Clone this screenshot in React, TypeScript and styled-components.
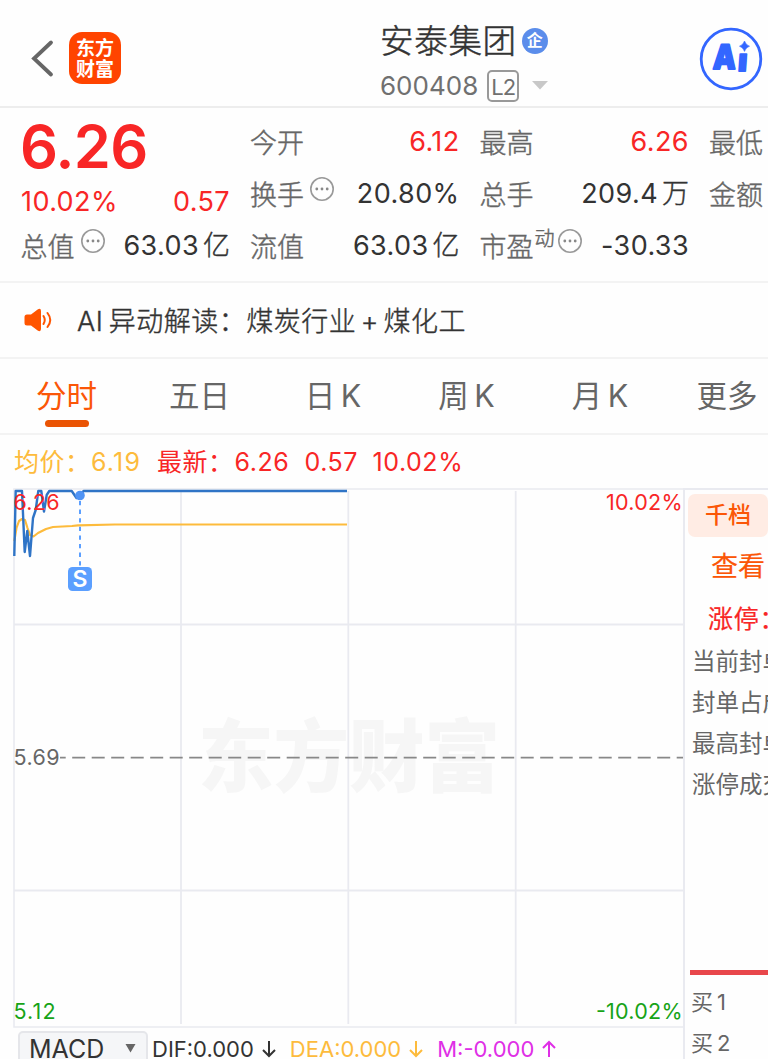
import React from "react";
import styled, { createGlobalStyle } from "styled-components";

const GlobalStyle = createGlobalStyle`
  * { box-sizing: border-box; }
  html, body { margin: 0; padding: 0; background: #fff; overflow: hidden; }
`;

const C = {
  red: "#f82626",
  ink: "#333",
  grey: "#666",
  orange: "#fb5607",
  yellow: "#fdbb3c",
  green: "#17a317",
  magenta: "#df2fe6",
  line: "#e9eaf0",
};

const FONT = `Inter, "Noto Sans CJK SC", sans-serif`;

const Page = styled.main`
  width: 768px;
  height: 1059px;
  overflow: hidden;
  background: #fefefe;
  color: ${C.ink};
  font-family: ${FONT};
  white-space: nowrap;
  display: flex;
  flex-direction: column;
`;

const Header = styled.header`
  flex: none;
  height: 108px;
  border-bottom: 2px solid #ededed;
  display: flex;
  align-items: flex-start;
  padding: 27px 5px 0 30px;
`;

const BackIcon = styled.svg`
  margin-top: 11px;
  width: 26px;
  height: 42px;
`;

const Logo = styled.div`
  margin: 5px 0 0 13px;
  padding-bottom: 2px;
  width: 52px;
  height: 52px;
  border-radius: 13px;
  background: #ff4400;
  color: #fff;
  font: 700 19px/21px "Noto Sans CJK SC", sans-serif;
  display: flex;
  flex-direction: column;
  align-items: center;
  justify-content: center;
`;

const StockTitle = styled.div`
  margin: -10px 0 0 259px;
`;

const NameRow = styled.h1`
  margin: 0;
  height: 47px;
  font-size: 33.5px;
  line-height: 44px;
  font-weight: 300;
  -webkit-text-stroke: 0.5px;
  letter-spacing: 0.7px;
  display: flex;
  align-items: center;
`;

const Badge = styled.span`
  margin-left: 5px;
  width: 26px;
  height: 26px;
  border-radius: 50%;
  background: #5b8deb;
  color: #fff;
  font-size: 16px;
  font-weight: 700;
  line-height: 24px;
  letter-spacing: 0;
  text-align: center;
  -webkit-text-stroke: 0;
`;

const CodeRow = styled.div`
  height: 43px;
  display: flex;
  align-items: center;
  color: #707070;
  font-size: 26px;
  letter-spacing: 0;
`;

const Level = styled.span`
  margin-left: 9px;
  width: 32px;
  height: 32px;
  border: 2px solid #999;
  border-radius: 5px;
  font-size: 22px;
  line-height: 30px;
  letter-spacing: -1px;
  text-align: center;
`;

const Caret = styled.svg`
  margin-left: 13px;
`;

const AiIcon = styled.svg`
  margin-left: auto;
  width: 64px;
  height: 64px;
`;

const Quote = styled.section`
  flex: none;
  height: 175px;
  border-bottom: 2px solid #f3f3f3;
  padding: 8px 0 0 21px;
  display: grid;
  grid-template-columns: 209px 209px 209px 58px;
  column-gap: 20.5px;
`;

const Column = styled.div`
  display: flex;
  flex-direction: column;
`;

const Cell = styled.div`
  height: 52px;
  display: flex;
  align-items: center;
  justify-content: space-between;
`;

const Label = styled.span`
  display: flex;
  align-items: center;
  padding-top: 4px;
  margin-left: -0.5px;
  color: ${C.grey};
  font-size: 27px;
  line-height: 36px;
  font-weight: 300;
  -webkit-text-stroke: 0.45px;
`;

const Dynamic = styled.sup`
  font-size: 20px;
  line-height: 20px;
  margin: -18px 0 0 1px;
`;

const Value = styled.span<{ $up?: boolean }>`
  color: ${(p) => (p.$up ? C.red : C.ink)};
  font-size: 27px;
  line-height: 36px;
  letter-spacing: 0.4px;
`;

const Unit = styled.span`
  margin-left: 4px;
  letter-spacing: 0;
  font-weight: 300;
  -webkit-text-stroke: 0.4px;
`;

const Price = styled.strong`
  color: ${C.red};
  font-size: 59.5px;
  height: 64px;
  line-height: 61px;
  font-weight: 600;
  letter-spacing: -0.7px;
  margin-left: -1px;
`;

const Change = styled(Cell)`
  height: 40px;
  padding-top: 4px;
`;

const Info = styled.svg<{ $gap: number }>`
  width: 26px;
  height: 26px;
  margin: -15px 0 0 ${(p) => p.$gap}px;
`;

const Notice = styled.section`
  flex: none;
  height: 76px;
  border-bottom: 2px solid #f3f3f3;
  padding: 0 0 0 24px;
  display: flex;
  align-items: center;
`;

const NoticeText = styled.span`
  margin: -2px 0 0 24px;
  font-weight: 300;
  -webkit-text-stroke: 0.4px;
  font-size: 27px;
  letter-spacing: 0.5px;
  word-spacing: -2.5px;
`;

const Plus = styled.span`
  margin: 0 4.5px;
`;

const Tabs = styled.nav`
  flex: none;
  height: 76px;
  border-bottom: 2px solid #f3f3f3;
  display: grid;
  grid-template-columns: 133px 133px 134px 133px 134px 120px;
`;

const Tab = styled.div<{ $active?: boolean }>`
  position: relative;
  display: flex;
  justify-content: center;
  padding-top: 14px;
  font-size: 30.5px;
  line-height: 46px;
  word-spacing: -3px;
  color: ${(p) => (p.$active ? C.orange : C.grey)};
  &::after {
    content: "";
    display: ${(p) => (p.$active ? "block" : "none")};
    position: absolute;
    left: 45px;
    bottom: 6px;
    width: 44px;
    height: 7px;
    border-radius: 4px;
    background: #ea5404;
  }
`;

const Legend = styled.section`
  flex: none;
  height: 53px;
  padding: 12px 0 0 14px;
  display: flex;
  align-items: baseline;
  font-size: 25px;
  line-height: 30px;
  letter-spacing: 0.55px;
`;

const LegendItem = styled.span<{ $color: string; $width: number; $spacing?: number }>`
  color: ${(p) => p.$color};
  width: ${(p) => p.$width}px;
  letter-spacing: ${(p) => p.$spacing ?? 0.55}px;
`;

const Board = styled.section`
  flex: 1;
  display: flex;
  min-height: 0;
`;

const ChartColumn = styled.div`
  flex: none;
  width: 683px;
`;

const Chart = styled.svg`
  display: block;
  width: 683px;
  height: 541px;
  font-family: ${FONT};
`;

const IndicatorBar = styled.div`
  display: flex;
  height: 36px;
  padding: 2px 0 0 18px;
`;

const IndicatorSelect = styled.div`
  width: 130px;
  height: 42px;
  border: 2px solid #e5e6ea;
  border-radius: 5px;
  background: #f5f6f8;
  padding: 0 10px 0 9px;
  display: flex;
  justify-content: space-between;
  font-size: 25px;
  line-height: 33px;
`;

const SelectCaret = styled.svg`
  margin-top: 10px;
`;

const Indicator = styled.span<{ $color: string; $gap: number }>`
  color: ${(p) => p.$color};
  margin-left: ${(p) => p.$gap}px;
  font-size: 22px;
  line-height: 36px;
  display: flex;
`;

const Arrow = styled.svg`
  margin: 9px 0 0 7px;
`;

const Side = styled.aside`
  width: 85px;
  overflow: hidden;
  border-left: 2px solid ${C.line};
  border-top: 2px solid ${C.line};
  padding: 4px 0 0 3px;
`;

const DepthButton = styled.div`
  width: 80px;
  height: 43px;
  border-radius: 7px;
  background: #ffece4;
  color: ${C.orange};
  font-size: 23px;
  line-height: 43px;
  font-weight: 500;
  text-align: center;
`;

const ViewLink = styled.div`
  padding-left: 23px;
  color: ${C.orange};
  font-size: 27px;
  font-weight: 400;
  -webkit-text-stroke: 0.2px;
  line-height: 60px;
`;

const LimitUp = styled.div`
  padding-left: 20px;
  color: ${C.red};
  font-size: 25px;
  font-weight: 400;
  -webkit-text-stroke: 0.2px;
  line-height: 44px;
  letter-spacing: 0.8px;
`;

const SideRow = styled.div`
  padding-left: 4px;
  color: ${C.grey};
  font-size: 23.5px;
  line-height: 41px;
`;

const Divider = styled.div`
  margin: 165px 0 7px 2px;
  height: 5px;
  background: #e8474b;
`;

const BuyRow = styled.div`
  padding-left: 3px;
  color: ${C.grey};
  font-size: 22px;
  line-height: 41px;
  display: flex;
  gap: 4px;
`;

const More = ({ gap }: { gap: number }) => (
  <Info $gap={gap} viewBox="0 0 26 26">
    <circle cx="13" cy="13" r="11.2" fill="none" stroke="#999" strokeWidth="1.6" />
    <circle cx="7.8" cy="13" r="1.4" fill="#888" />
    <circle cx="13" cy="13" r="1.4" fill="#888" />
    <circle cx="18.2" cy="13" r="1.4" fill="#888" />
  </Info>
);

const DirectionArrow = ({ up }: { up?: boolean }) => (
  <Arrow width="16" height="18" viewBox="0 0 16 18" fill="none" stroke="currentColor" strokeWidth="2">
    <path d={up ? "M8 17V2M2 8L8 2L14 8" : "M8 1V16M2 10L8 16L14 10"} />
  </Arrow>
);

const tabs = ["分时", "五日", "日 K", "周 K", "月 K", "更多"];
const sideRows = ["当前封单", "封单占成", "最高封单", "涨停成交"];

export default function App() {
  return (
    <Page>
      <GlobalStyle />
      <Header>
        <BackIcon viewBox="0 0 26 42">
          <path d="M21 4.5L4 20.5L21 36.5" fill="none" stroke="#666" strokeWidth="3.8" strokeLinecap="round" />
        </BackIcon>
        <Logo>
          <span>东方</span>
          <span>财富</span>
        </Logo>
        <StockTitle>
          <NameRow>
            安泰集团<Badge>企</Badge>
          </NameRow>
          <CodeRow>
            600408<Level>L2</Level>
            <Caret width="16" height="9" viewBox="0 0 16 9">
              <path d="M0 0H16L8 8.5Z" fill="#c8c8c8" />
            </Caret>
          </CodeRow>
        </StockTitle>
        <AiIcon viewBox="0 0 64 64">
          <circle cx="32" cy="32" r="29.8" fill="none" stroke="#3366ff" strokeWidth="2.8" />
          <g fill="#3366ff" stroke="#3366ff" strokeWidth="1.8" strokeLinejoin="round" fontFamily="Inter" fontWeight="900">
            <text transform="translate(13.5 42.3) skewX(-3)" fontSize="34" textLength="23" lengthAdjust="spacingAndGlyphs">A</text>
            <text transform="translate(38.5 44) skewX(-4)" fontSize="31">ı</text>
          </g>
          <path d="M45.5 14Q46.8 18 50.5 19.2Q46.8 20.4 45.5 24.4Q44.2 20.4 40.5 19.2Q44.2 18 45.5 14Z" fill="#3366ff" stroke="#3366ff" strokeWidth="0.6" />
        </AiIcon>
      </Header>

      <Quote>
        <Column>
          <Price>6.26</Price>
          <Change>
            <Value $up>10.02%</Value>
            <Value $up>0.57</Value>
          </Change>
          <Cell>
            <Label>总值<More gap={5} /></Label>
            <Value>63.03<Unit>亿</Unit></Value>
          </Cell>
        </Column>
        <Column>
          <Cell>
            <Label>今开</Label>
            <Value $up>6.12</Value>
          </Cell>
          <Cell>
            <Label>换手<More gap={5} /></Label>
            <Value>20.80%</Value>
          </Cell>
          <Cell>
            <Label>流值</Label>
            <Value>63.03<Unit>亿</Unit></Value>
          </Cell>
        </Column>
        <Column>
          <Cell>
            <Label>最高</Label>
            <Value $up>6.26</Value>
          </Cell>
          <Cell>
            <Label>总手</Label>
            <Value>209.4<Unit>万</Unit></Value>
          </Cell>
          <Cell>
            <Label>市盈<Dynamic>动</Dynamic><More gap={2} /></Label>
            <Value>-30.33</Value>
          </Cell>
        </Column>
        <Column>
          <Cell><Label>最低</Label></Cell>
          <Cell><Label>金额</Label></Cell>
        </Column>
      </Quote>

      <Notice>
        <svg width="29" height="24" viewBox="0 0 29 24">
          <path d="M3 6.5H7L14 1.2Q17 0 17 3V21Q17 24 14 22.8L7 17.5H3Q0.5 17.5 0.5 15V9Q0.5 6.5 3 6.5Z" fill="#ff5500" />
          <path d="M19.5 8Q22 12 19.5 16M23.5 5Q29 12 23.5 19" fill="none" stroke="#ff5500" strokeWidth="2" strokeLinecap="round" />
        </svg>
        <NoticeText>
          AI 异动解读：煤炭行业<Plus>+</Plus>煤化工
        </NoticeText>
      </Notice>

      <Tabs>
        {tabs.map((t, i) => (
          <Tab key={t} $active={i === 0}>{t}</Tab>
        ))}
      </Tabs>

      <Legend>
        <LegendItem $color={C.yellow} $width={77}>均价：</LegendItem>
        <LegendItem $color={C.yellow} $width={66} $spacing={1.2}>6.19</LegendItem>
        <LegendItem $color={C.red} $width={77.5}>最新：</LegendItem>
        <LegendItem $color={C.red} $width={70}>6.26</LegendItem>
        <LegendItem $color={C.red} $width={68}>0.57</LegendItem>
        <LegendItem $color={C.red} $width={95}>10.02%</LegendItem>
      </Legend>

      <Board>
        <ChartColumn>
          <Chart viewBox="0 488 683 541">
            <text x="198" y="786" fontSize="79" fontWeight="900" fill="#f6f6f6" textLength="302" lengthAdjust="spacingAndGlyphs">东方财富</text>
            <g stroke={C.line} strokeWidth="1.8" fill="none">
              <path d="M683 489H14V1027H683" strokeWidth="1.6" />
              <path d="M14 624.5H683M14 890.5H683" />
              <path d="M181 491V1024M348.3 491V1024M515.7 491V1024" />
            </g>
            <path d="M60 757.7H683" stroke="#888" strokeWidth="1.8" strokeDasharray="13 6.5" strokeDashoffset="7.3" />
            <path
              d="M14.3 541L16.5 528L19 521L22 519L25 520L27.5 528L30 535L33.5 536.5L38 533L46 529L53 527L72 526L78 525.3L115 524.5H347"
              fill="none" stroke={C.yellow} strokeWidth="2.2" strokeLinejoin="round"
            />
            <path
              d="M14.3 556L15.7 491H22L24.7 552L27.3 531L30 556L33 518L35.7 510L38.3 491H41.3L44 511.5L46.7 495L49.3 491H71.7L76.5 498L80 495.5L83.5 491H347"
              fill="none" stroke="#2f74c6" strokeWidth="2.4" strokeLinejoin="round"
            />
            <path d="M80 501V567" stroke="#5b9fff" strokeWidth="2" strokeDasharray="4.3 4.3" />
            <circle cx="80" cy="495.5" r="4.8" fill="#5094f5" />
            <rect x="68" y="567" width="24" height="24" rx="4.5" fill="#5b9fff" />
            <text x="80" y="587" fontSize="23" fontWeight="600" fill="#fff" textAnchor="middle">S</text>
            <g fontSize="21.5">
              <text x="13.5" y="510" fill={C.red} textLength="46">6.26</text>
              <text x="606" y="510" fill={C.red} textLength="76.5">10.02%</text>
              <text x="13.5" y="765" fill={C.grey} textLength="46">5.69</text>
              <text x="13.5" y="1019" fill={C.green} textLength="42">5.12</text>
              <text x="596" y="1019" fill={C.green} textLength="86.5">-10.02%</text>
            </g>
          </Chart>
          <IndicatorBar>
            <IndicatorSelect>
              MACD
              <SelectCaret width="11" height="11" viewBox="0 0 11 11">
                <path d="M0.5 1H10.5L5.5 9.5Z" fill="#666" />
              </SelectCaret>
            </IndicatorSelect>
            <Indicator $color={C.ink} $gap={4}>DIF:0.000<DirectionArrow /></Indicator>
            <Indicator $color={C.yellow} $gap={13}>DEA:0.000<DirectionArrow /></Indicator>
            <Indicator $color={C.magenta} $gap={13}>M:-0.000<DirectionArrow up /></Indicator>
          </IndicatorBar>
        </ChartColumn>
        <Side>
          <DepthButton>千档</DepthButton>
          <ViewLink>查看</ViewLink>
          <LimitUp>涨停：</LimitUp>
          {sideRows.map((r) => (
            <SideRow key={r}>{r}</SideRow>
          ))}
          <Divider />
          <BuyRow><span>买</span><span>1</span></BuyRow>
          <BuyRow><span>买</span><span>2</span></BuyRow>
        </Side>
      </Board>
    </Page>
  );
}
